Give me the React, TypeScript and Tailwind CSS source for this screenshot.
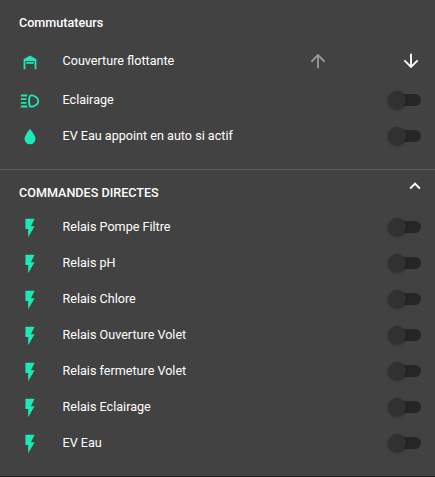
import { ReactNode } from "react";

const icons = {
    garage: "M19,20H17V11H7V20H5V9L12,5L19,9V20M8,12H16V14H8V12Z",
    light: "M13,4.8C9,4.8 9,19.2 13,19.2C17,19.2 22,16.5 22,12C22,7.5 17,4.8 13,4.8M13.1,17.2C12.7,16.8 12,15 12,12C12,9 12.7,7.2 13.1,6.8C16,6.9 20,8.7 20,12C20,15.3 16,17.1 13.1,17.2M2,5H9.5C9.3,5.4 9,5.8 8.9,6.4C8.8,6.6 8.8,6.8 8.7,7H2V5M8,11H2V9H8.2C8.1,9.6 8.1,10.3 8,11M8.7,17C8.9,17.8 9.2,18.4 9.6,19H2V17H8.7M8.2,15H2V13H8C8.1,13.7 8.1,14.4 8.2,15Z",
    water: "M12,20A6,6 0 0,1 6,14C6,10 12,3.25 12,3.25C12,3.25 18,10 18,14A6,6 0 0,1 12,20Z",
    flash: "M7,2V13H10V22L17,10H13L17,2H7Z",
    up: "M13,20H11V8L5.5,13.5L4.08,12.08L12,4.16L19.92,12.08L18.5,13.5L13,8V20Z",
    down: "M11,4H13V16L18.5,10.5L19.92,11.92L12,19.84L4.08,11.92L5.5,10.5L11,16V4Z",
    chevron: "M7.41,15.41L12,10.83L16.59,15.41L18,14L12,8L6,14L7.41,15.41Z",
};

type IconName = keyof typeof icons;

const relays = [
    "Relais Pompe Filtre",
    "Relais pH",
    "Relais Chlore",
    "Relais Ouverture Volet",
    "Relais fermeture Volet",
    "Relais Eclairage",
    "EV Eau",
];

function Icon({ name, className = "" }: { name: IconName; className?: string }){
    return(
        <svg viewBox="0 0 24 24" className={`size-[22px] shrink-0 fill-current ${className}`}>
            <path d={icons[name]} />
        </svg>
    )
}

function Toggle(){
    return(
        <button role="switch" aria-checked="false" className="flex w-[33px] h-[18px] items-center">
            <span className="size-[18px] shrink-0 rounded-full bg-[#313131] z-10 shadow-[0_1px_3px_rgba(0,0,0,0.35)]" />
            <span className="-ml-[15.6px] w-[30.6px] h-[12.6px] shrink-0 rounded-full bg-[#262626]" />
        </button>
    )
}

function Row({ icon, label, children }: { icon: IconName; label: string; children?: ReactNode }){
    return(
        <div className="flex h-9 items-center pl-[19px] pr-[14px]">
            <Icon name={icon} className="mt-[2px] text-[#1de9b6]" />
            <span className="ml-[21.5px] flex-1 whitespace-nowrap">{label}</span>
            {children ?? <Toggle />}
        </div>
    )
}

export default function App(){
    return(
        <div className="h-[477px] w-full overflow-hidden border-b border-[#1c1c1c] bg-[#424242] font-[Roboto,sans-serif] text-[12.6px] leading-[18px] text-white">
            <h2 className="pt-[14px] pl-[19px] font-medium">Commutateurs</h2>

            <div className="pt-[11px]">
                <Row icon="garage" label="Couverture flottante">
                    <div className="flex gap-[71px] -mr-[1px]">
                        <Icon name="up" className="text-[#9a9a9a]" />
                        <Icon name="down" />
                    </div>
                </Row>
            </div>
            <div className="pt-[3px]">
                <Row icon="light" label="Eclairage" />
                <Row icon="water" label="EV Eau appoint en auto si actif" />
            </div>

            <hr className="mt-[15px] border-[#5e5e5e]" />

            <div className="flex h-[39px] items-start justify-between pt-[4px] pl-[19px] pr-[9.4px]">
                <h2 className="pt-[10px] font-medium">COMMANDES DIRECTES</h2>
                <Icon name="chevron" className="mt-[0.8px]" />
            </div>
            {relays.map((label)=> <Row key={label} icon="flash" label={label} />)}
        </div>
    )
}
